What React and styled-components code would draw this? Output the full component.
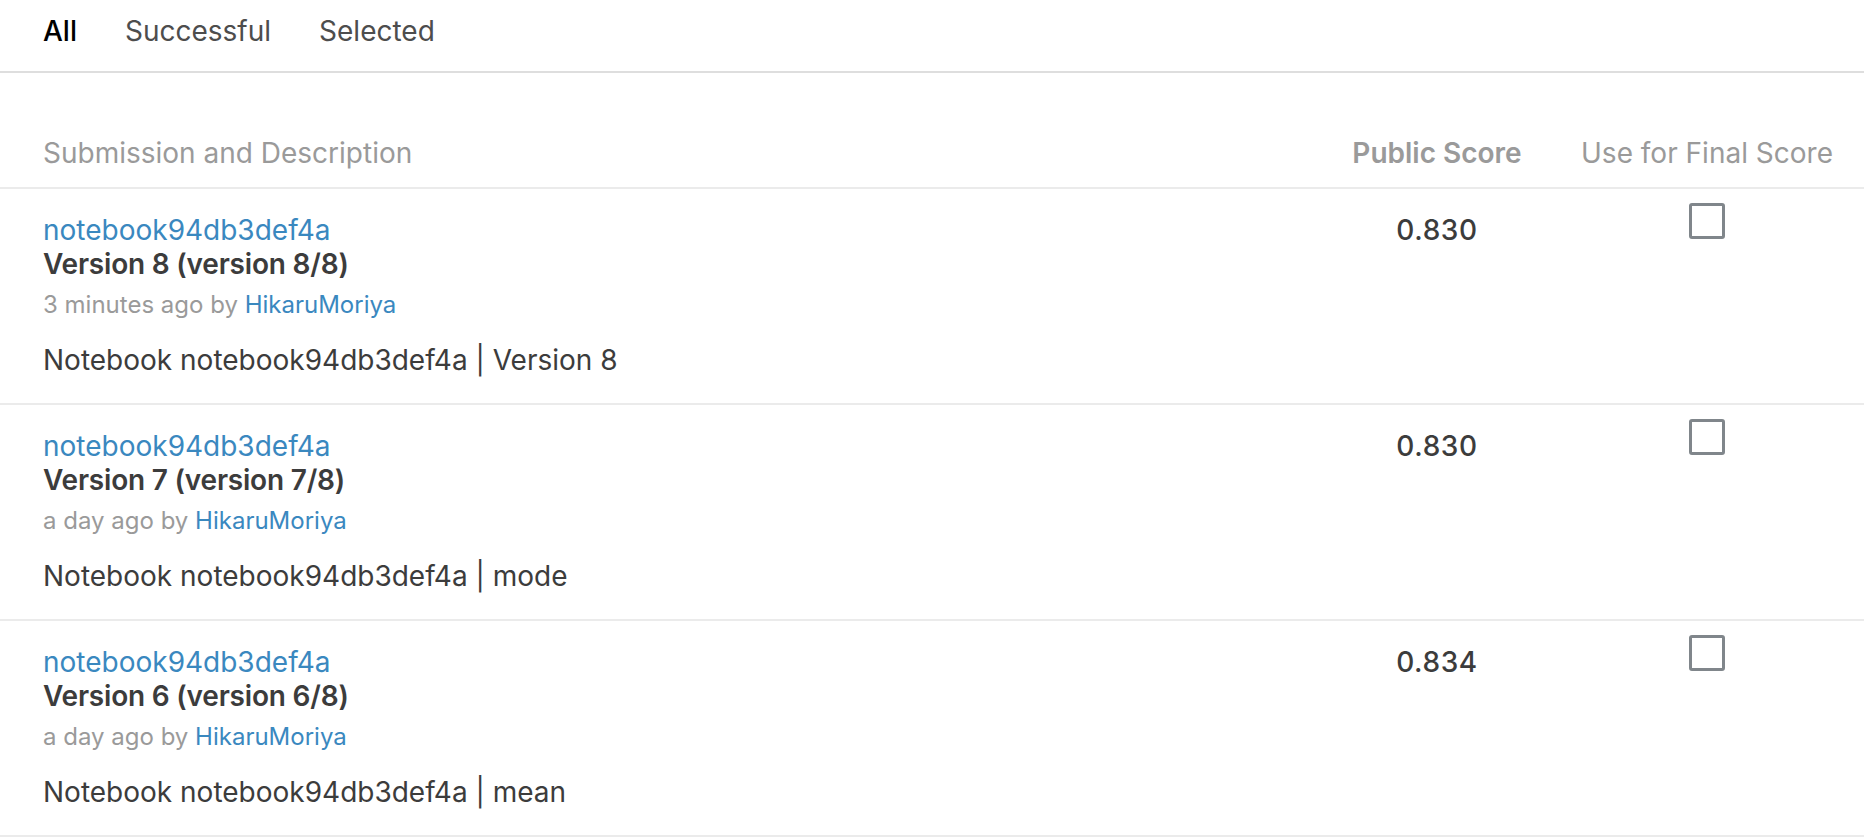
import styled, { createGlobalStyle } from "styled-components";

// 제출 목록 화면

const GlobalStyle = createGlobalStyle`
  body {
    margin: 0;
    background: #ffffff;
    font-family: Inter, "Noto Sans", sans-serif;
    color: #3c4043;
  }
`;

const Tabs = styled.div`
  display: flex;
  gap: 48px;
  height: 57px;
  padding: 14px 0 0 43px;
  border-bottom: 2px solid #dedede;
`;

const Tab = styled.div`
  font-size: 28px;
  line-height: 34px;
  font-weight: ${(props) => (props.active ? 500 : 400)};
  color: ${(props) => (props.active ? "#000000" : "#4d4d4d")};
`;

// 표는 grid로: 설명 / 점수 / 최종 선택
const Grid = styled.div`
  display: grid;
  grid-template-columns: 1fr 200px 260px;
  column-gap: 40px;
  padding: 0 27px 0 43px;
`;

const Head = styled(Grid)`
  margin-top: 63px;
  padding-bottom: 17px;
  border-bottom: 2px solid #ebebeb;
`;

const HeadCell = styled.div`
  font-size: 28px;
  line-height: 34px;
  white-space: nowrap;
  color: #9a9a9a;
  font-weight: ${(props) => (props.bold ? 600 : 400)};
  text-align: ${(props) => (props.center ? "center" : "left")};
`;

const Row = styled(Grid)`
  padding-top: 24px;
  padding-bottom: 26px;
  border-bottom: 2px solid #ebebeb;
`;

const Info = styled.div`
  display: flex;
  flex-direction: column;
`;

const Title = styled.a`
  font-size: 28px;
  line-height: 34px;
  color: #3a88bf;
  text-decoration: none;
`;

const Version = styled.div`
  font-size: 28px;
  line-height: 34px;
  font-weight: 600;
  letter-spacing: -0.2px;
  color: #3c3c3c;
`;

const Meta = styled.div`
  margin-top: 9px;
  font-size: 24px;
  line-height: 30px;
  color: #9a9a9a;
`;

const Author = styled.a`
  color: #3a88bf;
  text-decoration: none;
`;

const Desc = styled.div`
  margin-top: 23px;
  font-size: 28px;
  line-height: 34px;
  color: #3c3c3c;
`;

const Score = styled.div`
  font-size: 28px;
  line-height: 34px;
  font-weight: 500;
  letter-spacing: 0.6px;
  color: #3c3c3c;
  text-align: center;
`;

const CheckCell = styled.div`
  display: flex;
  justify-content: center;
  margin-top: -10px;
`;

const Box = styled.div`
  width: 30px;
  height: 30px;
  border: 3px solid #80868b;
  border-radius: 3px;
`;

const rows = [
  { version: 8, ago: "3 minutes ago", desc: "Version 8", score: "0.830" },
  { version: 7, ago: "a day ago", desc: "mode", score: "0.830" },
  { version: 6, ago: "a day ago", desc: "mean", score: "0.834" },
];

function App() {
  return (
    <>
      <GlobalStyle />
      <Tabs>
        <Tab active>All</Tab>
        <Tab>Successful</Tab>
        <Tab>Selected</Tab>
      </Tabs>
      <Head>
        <HeadCell>Submission and Description</HeadCell>
        <HeadCell bold center>Public Score</HeadCell>
        <HeadCell center>Use for Final Score</HeadCell>
      </Head>
      {rows.map((r) => (
        <Row key={r.version}>
          <Info>
            <Title href="#">notebook94db3def4a</Title>
            <Version>
              Version {r.version} (version {r.version}/8)
            </Version>
            <Meta>
              {r.ago} by <Author href="#">HikaruMoriya</Author>
            </Meta>
            <Desc>Notebook notebook94db3def4a | {r.desc}</Desc>
          </Info>
          <Score>{r.score}</Score>
          <CheckCell>
            <Box />
          </CheckCell>
        </Row>
      ))}
    </>
  );
}

export default App;
